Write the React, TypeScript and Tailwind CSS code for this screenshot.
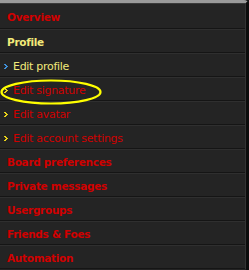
import React from 'react';

type Item = { label: string; kind: 'head' | 'active' | 'sub' | 'subActive'; bullet?: string };

const items: Item[] = [
  { label: 'Overview', kind: 'head' },
  { label: 'Profile', kind: 'active' },
  { label: 'Edit profile', kind: 'subActive', bullet: '#3f8fd8' },
  { label: 'Edit signature', kind: 'sub', bullet: '#e8d21a' },
  { label: 'Edit avatar', kind: 'sub', bullet: '#e8d21a' },
  { label: 'Edit account settings', kind: 'sub', bullet: '#e8d21a' },
  { label: 'Board preferences', kind: 'head' },
  { label: 'Private messages', kind: 'head' },
  { label: 'Usergroups', kind: 'head' },
  { label: 'Friends & Foes', kind: 'head' },
  { label: 'Automation', kind: 'head' },
];

const Bullet = ({ color }: { color: string }) => (
  <svg width="4" height="5" viewBox="0 0 4 5" className="shrink-0">
    <path d="M0 0h2v1h1v1h1v1h-1v1h-1v1h-2v-1h1v-1h1v-1h-1v-1h-1z" fill={color} />
  </svg>
);

export default function App() {
  return (
    <div className="w-[249px] h-[270px] bg-[#141414] overflow-hidden" style={{ fontFamily: '"DejaVu Sans", Verdana, sans-serif' }}>
      <div className="relative h-full border-t-[3px] border-r-[3px] border-t-[#9a9a9a] border-r-[#0c0c0c] rounded-tr-[5px] bg-[#242424]">
        <div className="h-[1px] bg-[#3a3a3a]" />
        <ul className="flex flex-col border-r border-r-[#333]">
          {items.map((it, i) => (
            <li
              key={i}
              className="h-[24px] flex items-center gap-[5px] border-b border-b-[#151515] border-t border-t-[#2f2f2f] first:h-[25px] first:border-t-0"
            >
              {it.bullet ? (
                <div className="flex items-center gap-[5px] pl-[4px] pt-[2px]">
                  <Bullet color={it.bullet} />
                  <span
                    className={`text-[11px] leading-none tracking-[-0.3px] ${it.kind === 'subActive' ? 'text-[#f2ea7a]' : 'text-[#d00000]'}`}
                  >
                    {it.label}
                  </span>
                </div>
              ) : (
                <span
                  className={`pl-[7px] pt-[2px] text-[10.5px] font-bold leading-none tracking-[-0.3px] ${it.kind === 'active' ? 'text-[#f2ea7a]' : 'text-[#d00000]'}`}
                >
                  {it.label}
                </span>
              )}
            </li>
          ))}
        </ul>
        {/* highlight ring around Edit signature */}
        <svg className="absolute left-0 top-[76px] pointer-events-none" width="104" height="28" viewBox="0 0 104 28">
          <ellipse cx="51" cy="13" rx="49.5" ry="11.5" fill="none" stroke="#ffff00" strokeWidth="2.2" />
        </svg>
      </div>
    </div>
  );
}
